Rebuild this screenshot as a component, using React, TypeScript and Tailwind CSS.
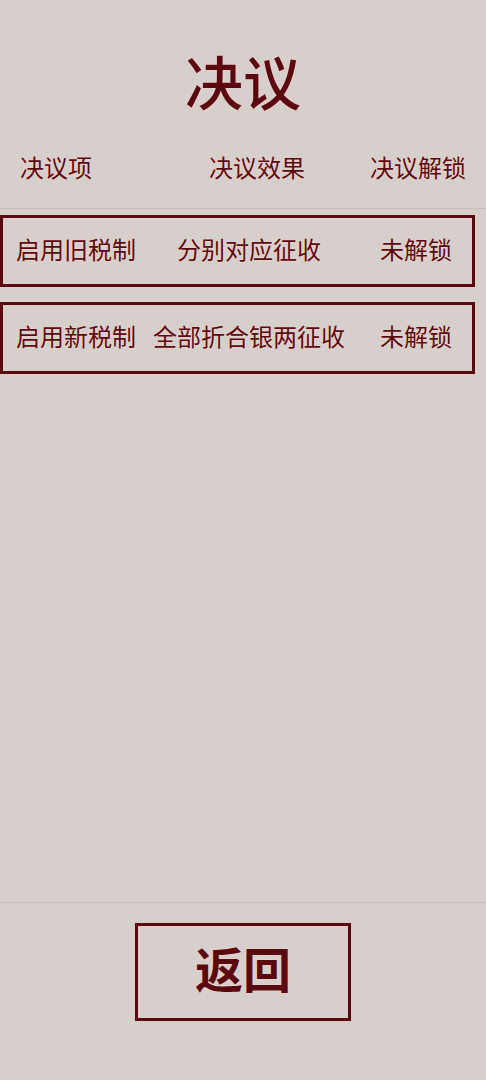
import React from 'react';

interface Resolution {
  name: string;
  effect: string;
  status: string;
}

const resolutions: Resolution[] = [
  { name: '启用旧税制', effect: '分别对应征收', status: '未解锁' },
  { name: '启用新税制', effect: '全部折合银两征收', status: '未解锁' },
];

const glow = '[text-shadow:0_0_2px_#f6d6d0,0_0_1px_#f6d6d0]';

export default function App() {
  return (
    <div
      className="w-[486px] h-[1080px] bg-[#d6cfcc] text-[#5a0a0e] flex flex-col"
      style={{ fontFamily: '"Noto Sans CJK SC", "Noto Sans", sans-serif' }}
    >
      <h1 className={`h-[122px] pt-[42px] text-center text-[58px] leading-[76px] font-medium ${glow}`}>
        决议
      </h1>

      <div className={`flex h-[86px] items-center pt-[4px] text-[24px] ${glow}`}>
        <div className="w-[160px] pl-[20px]">决议项</div>
        <div className="w-[194px] text-center">决议效果</div>
        <div className="flex-1 pr-[20px] text-right">决议解锁</div>
      </div>

      <div className="h-px bg-[#c6bcba]" />

      <div className="flex flex-1 flex-col gap-[15px] pt-[6px]">
        {resolutions.map((r) => (
          <div
            key={r.name}
            className={`flex h-[72px] w-[475px] items-center border-[3px] border-[#5a0a0e] pb-[4px] text-[24px] ${glow}`}
          >
            <div className="w-[148px] pl-[13px] whitespace-nowrap">{r.name}</div>
            <div className="w-[196px] text-center whitespace-nowrap">{r.effect}</div>
            <div className="flex-1 pr-[20px] text-right whitespace-nowrap">{r.status}</div>
          </div>
        ))}
      </div>

      <div className="h-px bg-[#c6bcba]" />

      <div className="flex h-[177px] justify-center pt-[20px]">
        <button
          type="button"
          className={`h-[98px] w-[216px] border-[3px] border-[#5a0a0e] pb-[10px] text-[48px] font-bold ${glow}`}
        >
          返回
        </button>
      </div>
    </div>
  );
}
